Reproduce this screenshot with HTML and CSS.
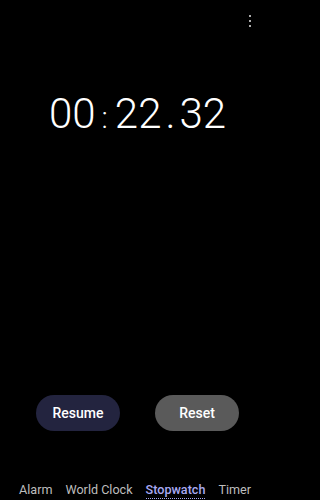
FILE: index.html
```html
<!DOCTYPE html>
<html>
<head>
<meta charset="utf-8">
<link rel="stylesheet" href="styles.css">
</head>
<body>
<div class="screen">
  <header class="topbar">
    <button class="more" aria-label="More options">
      <span class="dot"></span><span class="dot"></span><span class="dot"></span>
    </button>
  </header>
  <div class="time">
    <span class="digits">00</span><span class="colon">:</span><span class="digits">22</span><span class="sep">.</span><span class="digits">32</span>
  </div>
  <div class="spacer"></div>
  <div class="actions">
    <button class="btn btn-resume">Resume</button>
    <button class="btn btn-reset">Reset</button>
  </div>
  <nav class="tabs">
    <span class="tab">Alarm</span>
    <span class="tab">World Clock</span>
    <span class="tab active">Stopwatch</span>
    <span class="tab">Timer</span>
  </nav>
</div>
</body>
</html>
```
FILE: styles.css
```css
html, body {
  margin: 0;
  padding: 0;
  background: #000;
}
body {
  font-family: Roboto, "Noto Sans", sans-serif;
  color: #fff;
}
.screen {
  width: 275px;
  height: 500px;
  display: flex;
  flex-direction: column;
  overflow: hidden;
}
.topbar {
  display: flex;
  justify-content: flex-end;
  padding: 15px 22px 0 0;
  height: 19px;
}
.more {
  background: none;
  border: 0;
  padding: 0;
  width: 6px;
  height: 12px;
  display: flex;
  flex-direction: column;
  align-items: center;
  gap: 3px;
}
.dot {
  width: 2px;
  height: 2px;
  border-radius: 1px;
  background: #e6e6e6;
}
.time {
  margin-top: 56px;
  display: flex;
  justify-content: center;
  align-items: baseline;
  font-weight: 300;
  font-size: 42px;
  line-height: 48px;
  color: #fff;
}
.colon {
  font-size: 30px;
  margin: 0 7px 0 6px;
}
.sep {
  margin: 0 4px;
}
.spacer {
  flex: 1;
}
.actions {
  display: flex;
  justify-content: space-between;
  padding: 0 36px;
  margin-bottom: 50px;
}
.btn {
  height: 36px;
  width: 84px;
  border: 0;
  border-radius: 18px;
  color: #fff;
  font-family: Roboto, "Noto Sans", sans-serif;
  font-size: 14px;
  font-weight: 500;
  padding: 0;
}
.btn-resume {
  background: #23243f;
}
.btn-reset {
  background: #5a5a5a;
}
.tabs {
  display: flex;
  align-items: flex-start;
  gap: 13px;
  padding: 0 0 1px 19px;
  font-size: 12.6px;
}
.tab {
  color: #bdbdbd;
  line-height: 17px;
  height: 17px;
}
.tab.active {
  color: #a9a9f2;
  font-weight: 500;
  border-bottom: 1px dotted #a9a9f2;
}
```
